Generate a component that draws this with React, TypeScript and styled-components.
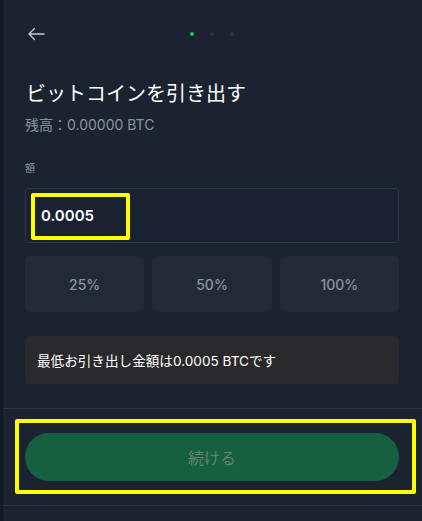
import React, { useState } from 'react'
import styled, { createGlobalStyle } from 'styled-components'

const GlobalStyle = createGlobalStyle`
  * { box-sizing: border-box; }
  html, body { margin: 0; padding: 0; background: #1b2230; }
  body {
    font-family: Inter, "Noto Sans CJK JP", sans-serif;
    -webkit-font-smoothing: antialiased;
  }
`

const Panel = styled.div`
  width: 422px;
  height: 521px;
  background: #1b2230;
  border-left: 3px solid #141a23;
  display: flex;
  flex-direction: column;
  overflow: hidden;
`

const Body = styled.div`
  display: flex;
  flex-direction: column;
  padding: 24px 23px 0 22px;
`

const Header = styled.div`
  position: relative;
  height: 20px;
  display: flex;
  align-items: center;
`

const BackButton = styled.button`
  background: none;
  border: none;
  padding: 0;
  margin-left: 2px;
  display: flex;
  cursor: pointer;
`

const Dots = styled.div`
  position: absolute;
  left: 165px;
  top: 8px;
  display: flex;
  gap: 16px;
`

const Dot = styled.span<{ $active?: boolean }>`
  width: 4px;
  height: 4px;
  border-radius: 50%;
  background: ${({ $active }) => ($active ? '#1fc15f' : '#2b3341')};
`

const Title = styled.h1`
  margin: 35px 0 0 1px;
  font-family: "Noto Sans CJK JP", sans-serif;
  font-size: 20px;
  line-height: 28px;
  font-weight: 400;
  color: #ffffff;
`

const Balance = styled.div`
  margin-top: 9px;
  font-size: 14px;
  line-height: 18px;
  color: #8a93a1;
`

const Label = styled.div`
  margin-top: 27px;
  font-size: 10px;
  line-height: 14px;
  color: #8a93a1;
`

const InputWrap = styled.div`
  position: relative;
  margin-top: 13px;
`

const AmountInput = styled.input`
  width: 100%;
  height: 55px;
  background: #1a2130;
  border: 1px solid #2e3746;
  border-radius: 3px;
  padding: 0 15px;
  color: #ffffff;
  font-family: Inter, sans-serif;
  font-size: 15px;
  font-weight: 600;
  &:focus { outline: none; }
`

const Highlight = styled.div<{ $top: number; $left: number; $w: number; $h: number }>`
  position: absolute;
  top: ${({ $top }) => $top}px;
  left: ${({ $left }) => $left}px;
  width: ${({ $w }) => $w}px;
  height: ${({ $h }) => $h}px;
  border: 4px solid #ffff00;
  border-radius: 2px;
  pointer-events: none;
`

const PercentRow = styled.div`
  margin-top: 13px;
  display: grid;
  grid-template-columns: repeat(3, 1fr);
  gap: 8px;
`

const PercentButton = styled.button`
  height: 56px;
  border: none;
  border-radius: 6px;
  background: #222a36;
  color: #8a93a1;
  font-family: Inter, sans-serif;
  font-size: 14px;
  font-weight: 500;
  cursor: pointer;
`

const Notice = styled.div`
  margin-top: 24px;
  height: 48px;
  border-radius: 6px;
  background: #29292b;
  display: flex;
  align-items: center;
  padding: 0 12px;
  color: #ffffff;
  font-size: 13.6px;
`

const Divider = styled.div`
  height: 1px;
  background: #2b3240;
`

const Footer = styled.div`
  position: relative;
  padding: 24px 23px 24px 22px;
  margin-top: 24px;
  border-top: 1px solid #2b3240;
`

const ContinueButton = styled.button`
  width: 100%;
  height: 48px;
  border: none;
  border-radius: 24px;
  background: #17603f;
  color: #5f8470;
  font-family: "Noto Sans CJK JP", sans-serif;
  font-size: 16px;
  cursor: not-allowed;
`

const BackArrow = () => (
  <svg width="18" height="14" viewBox="0 0 18 14" fill="none">
    <path d="M17 7H2M7.5 1.5L2 7l5.5 5.5" stroke="#c3c8d0" strokeWidth="1.4" strokeLinecap="round" strokeLinejoin="round" />
  </svg>
)

export default function App() {
  const [amount, setAmount] = useState('0.0005')

  return (
    <>
      <GlobalStyle />
      <Panel>
        <Body>
          <Header>
            <BackButton aria-label="戻る"><BackArrow /></BackButton>
            <Dots>
              <Dot $active />
              <Dot />
              <Dot />
            </Dots>
          </Header>
          <Title>ビットコインを引き出す</Title>
          <Balance>残高：0.00000 BTC</Balance>
          <Label>額</Label>
          <InputWrap>
            <AmountInput value={amount} onChange={(e) => setAmount(e.target.value)} />
            <Highlight $top={5} $left={6} $w={99} $h={47} />
          </InputWrap>
          <PercentRow>
            <PercentButton>25%</PercentButton>
            <PercentButton>50%</PercentButton>
            <PercentButton>100%</PercentButton>
          </PercentRow>
          <Notice>最低お引き出し金額は0.0005 BTCです</Notice>
        </Body>
        <Footer>
          <ContinueButton disabled>続ける</ContinueButton>
          <Highlight $top={10} $left={12} $w={401} $h={75} />
        </Footer>
        <Divider />
      </Panel>
    </>
  )
}
